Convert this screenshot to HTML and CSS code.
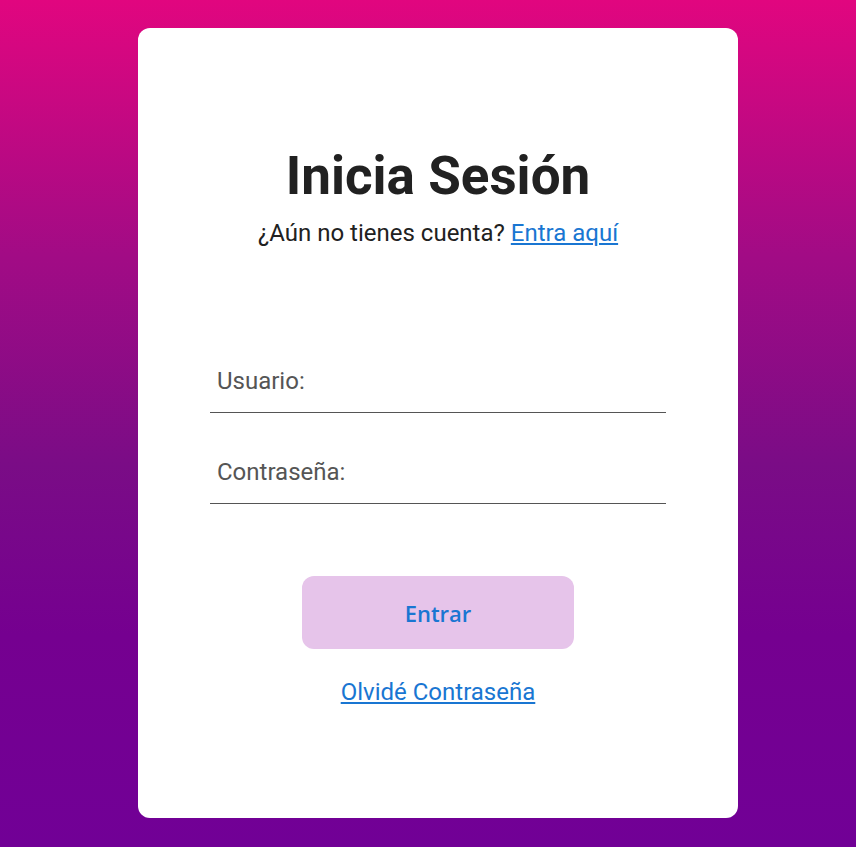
FILE: index.html
```html
<!DOCTYPE html>
<html lang="es">
<head>
<meta charset="utf-8">
<title>Inicia Sesión</title>
<link rel="stylesheet" href="styles.css">
</head>
<body>
  <main class="card">
    <h1 class="title">Inicia Sesión</h1>
    <p class="subtitle">¿Aún no tienes cuenta? <a href="#" class="link">Entra aquí</a></p>
    <form class="form">
      <input class="field" type="text" placeholder="Usuario:">
      <input class="field" type="password" placeholder="Contraseña:">
      <button class="btn" type="button">Entrar</button>
      <a href="#" class="link forgot">Olvidé Contraseña</a>
    </form>
  </main>
</body>
</html>
```

FILE: styles.css
```css
html, body {
  margin: 0;
  padding: 0;
}
body {
  min-height: 847px;
  background: linear-gradient(180deg, #e1067f 0%, #a20b85 30%, #7a0c86 55%, #750090 75%, #710096 100%);
  font-family: Roboto, "Liberation Sans", sans-serif;
  display: flex;
  justify-content: center;
  padding-top: 28px;
  padding-left: 20px;
  box-sizing: border-box;
}
.card {
  width: 600px;
  height: 790px;
  background: #fff;
  border-radius: 12px;
  box-sizing: border-box;
  padding-top: 115px;
  display: flex;
  flex-direction: column;
  align-items: center;
}
.title {
  margin: 0 0 9px;
  font-size: 53px;
  line-height: 67px;
  font-weight: 700;
  color: #212121;
}
.subtitle {
  margin: 0;
  font-size: 24px;
  color: #212121;
}
.link {
  color: #1976d2;
  text-decoration: underline;
}
.form {
  margin-top: 104px;
  display: flex;
  flex-direction: column;
  align-items: center;
}
.field {
  width: 456px;
  box-sizing: border-box;
  border: none;
  border-bottom: 1px solid #555;
  padding: 16px 7px 17px;
  font-family: Roboto, "Liberation Sans", sans-serif;
  font-size: 24px;
  line-height: normal;
  color: #333;
  outline: none;
  margin-bottom: 29px;
  background: transparent;
}
.field::placeholder {
  color: #555;
}
.field + .field {
  margin-bottom: 72px;
}
.btn {
  width: 272px;
  height: 73px;
  border: none;
  border-radius: 12px;
  background: #e6c4ea;
  color: #1976d2;
  font-family: "Open Sans", "Noto Sans", sans-serif;
  font-weight: 600;
  font-size: 22px;
  cursor: pointer;
}
.forgot {
  margin-top: 29px;
  font-size: 24px;
}
```
